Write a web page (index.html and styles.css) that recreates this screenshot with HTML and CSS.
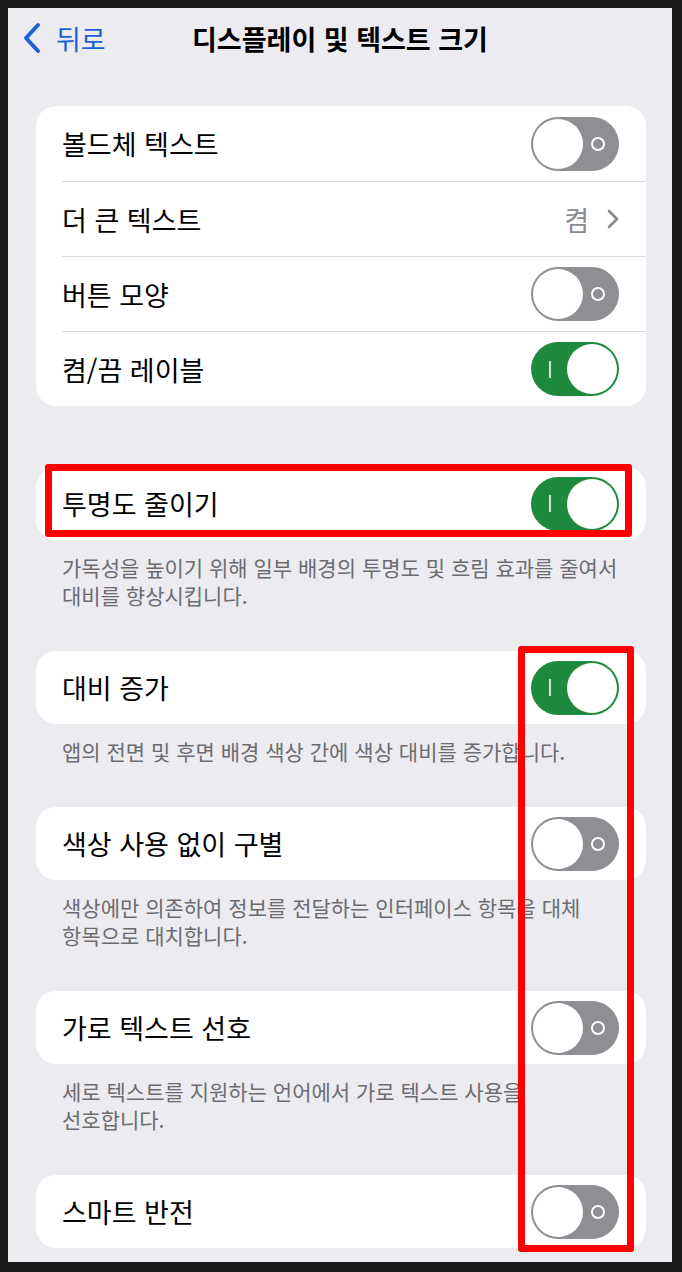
FILE: index.html
```html
<!DOCTYPE html>
<html lang="ko">
<head>
  <meta charset="UTF-8" />
  <meta name="viewport" content="width=device-width, initial-scale=1.0"/>
  <title>디스플레이 및 텍스트 크기</title>
  <link rel="stylesheet" href="styles.css">
</head>
<body>

  <div class="screen">

    <div class="nav">
      <div class="back">
        <svg width="20" height="32" viewBox="0 0 20 32">
          <polyline points="16,3 4,16 16,29" fill="none" stroke="#1f5fd9" stroke-width="4" stroke-linecap="round" stroke-linejoin="round"/>
        </svg>
        <span>뒤로</span>
      </div>
      <div class="title">디스플레이 및 텍스트 크기</div>
      <div></div>
    </div>

    <div class="content">

      <div class="card card-main">
        <div class="row">
          <span class="label">볼드체 텍스트</span>
          <div class="toggle off"><span class="knob"></span><span class="mark"></span></div>
        </div>
        <div class="row">
          <span class="label">더 큰 텍스트</span>
          <div class="value">
            <span>켬</span>
            <svg width="12" height="20" viewBox="0 0 12 20">
              <polyline points="2,2 10,10 2,18" fill="none" stroke="#8a8a8e" stroke-width="2.6" stroke-linecap="round" stroke-linejoin="round"/>
            </svg>
          </div>
        </div>
        <div class="row">
          <span class="label">버튼 모양</span>
          <div class="toggle off"><span class="knob"></span><span class="mark"></span></div>
        </div>
        <div class="row">
          <span class="label">켬/끔 레이블</span>
          <div class="toggle on"><span class="mark"></span><span class="knob"></span></div>
        </div>
      </div>

      <div class="card card-first">
        <div class="row">
          <span class="label">투명도 줄이기</span>
          <div class="toggle on"><span class="mark"></span><span class="knob"></span></div>
        </div>
      </div>
      <p class="footer">가독성을 높이기 위해 일부 배경의 투명도 및 흐림 효과를 줄여서<br>대비를 향상시킵니다.</p>

      <div class="card">
        <div class="row">
          <span class="label">대비 증가</span>
          <div class="toggle on"><span class="mark"></span><span class="knob"></span></div>
        </div>
      </div>
      <p class="footer">앱의 전면 및 후면 배경 색상 간에 색상 대비를 증가합니다.</p>

      <div class="card">
        <div class="row">
          <span class="label">색상 사용 없이 구별</span>
          <div class="toggle off"><span class="knob"></span><span class="mark"></span></div>
        </div>
      </div>
      <p class="footer">색상에만 의존하여 정보를 전달하는 인터페이스 항목을 대체<br>항목으로 대치합니다.</p>

      <div class="card">
        <div class="row">
          <span class="label">가로 텍스트 선호</span>
          <div class="toggle off"><span class="knob"></span><span class="mark"></span></div>
        </div>
      </div>
      <p class="footer">세로 텍스트를 지원하는 언어에서 가로 텍스트 사용을<br>선호합니다.</p>

      <div class="card">
        <div class="row">
          <span class="label">스마트 반전</span>
          <div class="toggle off"><span class="knob"></span><span class="mark"></span></div>
        </div>
      </div>

    </div>

    <!-- annotation boxes -->
    <div class="highlight box-1"></div>
    <div class="highlight box-2"></div>

  </div>

</body>
</html>
```

FILE: styles.css
```css
body {
  margin: 0;
  background-color: #1b1b1b;
  font-family: "Noto Sans CJK KR", "Noto Sans", sans-serif;
}

.screen {
  position: relative;
  margin: 8px 10px 10px 8px;
  height: 1254px;
  background-color: #ebebf0;
  overflow: hidden;
}

.nav {
  height: 60px;
  display: grid;
  grid-template-columns: 1fr auto 1fr;
  align-items: center;
}

.back {
  display: flex;
  align-items: center;
  gap: 14px;
  padding-left: 14px;
  color: #1f5fd9;
  font-size: 27px;
}

.back svg {
  display: block;
}

.title {
  font-size: 27px;
  font-weight: 600;
  color: #000;
}

.content {
  padding: 0 26px 0 28px;
}

.card {
  background-color: #fff;
  border-radius: 20px;
  margin-top: 42px;
}

.card-main {
  margin-top: 38px;
}

.card-first {
  margin-top: 61px;
}

.row {
  height: 73px;
  margin-left: 26px;
  padding-right: 27px;
  display: flex;
  align-items: center;
  justify-content: space-between;
  box-sizing: border-box;
}

.card-main .row {
  height: 75px;
}

.row + .row {
  border-top: 1px solid #dcdce0;
}

.label {
  font-size: 27px;
  color: #000;
}

.value {
  display: flex;
  align-items: center;
  gap: 18px;
  font-size: 27px;
  color: #8a8a8e;
}

.value svg {
  display: block;
}

.footer {
  margin: 0;
  padding: 13px 26px 0 26px;
  font-size: 21px;
  line-height: 28px;
  color: #6c6c70;
}

.toggle {
  width: 88px;
  height: 54px;
  padding: 2px;
  box-sizing: border-box;
  border-radius: 27px;
  display: flex;
  align-items: center;
}

.toggle.off { background-color: #8e8e93; }
.toggle.on { background-color: #1f8a3d; }

.knob {
  width: 50px;
  height: 50px;
  border-radius: 50%;
  background-color: #fff;
  flex-shrink: 0;
}

.mark {
  flex: 1;
  display: flex;
  justify-content: center;
}

.off .mark::after {
  content: "";
  width: 10px;
  height: 10px;
  border: 2px solid #fff;
  border-radius: 50%;
  margin-left: -4px;
}

.on .mark::after {
  content: "";
  width: 2px;
  height: 17px;
  background-color: #cfe8d5;
}

.highlight {
  position: absolute;
  border: 7px solid #ff0000;
  border-radius: 3px;
  box-sizing: border-box;
}

.box-1 {
  left: 37px;
  top: 456px;
  width: 587px;
  height: 73px;
}

.box-2 {
  left: 510px;
  top: 638px;
  width: 116px;
  height: 606px;
}
```
